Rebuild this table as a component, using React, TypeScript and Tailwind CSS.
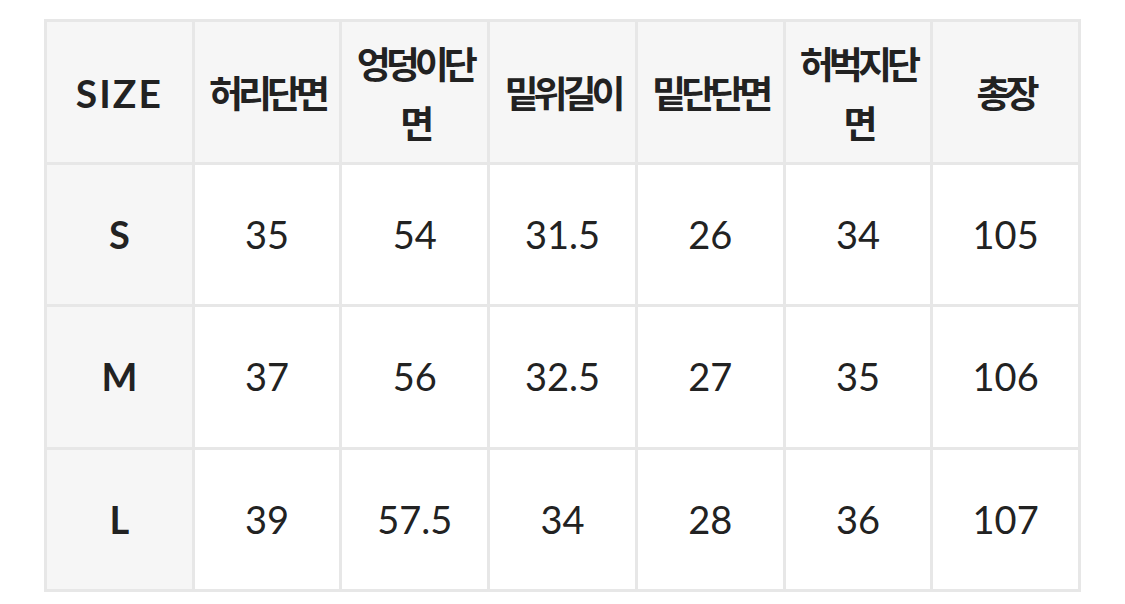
const headers = ["SIZE", "허리단면", "엉덩이단\n면", "밑위길이", "밑단단면", "허벅지단\n면", "총장"];

const rows = [
  ["S", "35", "54", "31.5", "26", "34", "105"],
  ["M", "37", "56", "32.5", "27", "35", "106"],
  ["L", "39", "57.5", "34", "28", "36", "107"],
];

export default function App() {
  return (
    <div className="w-[1125px] h-[604px] bg-white pl-[44px] pt-[19px] font-['Lato','Noto_Sans_CJK_KR',sans-serif] text-[#222]">
      <div className="grid grid-cols-7 grid-rows-4 gap-[3px] p-[3px] w-[1037px] h-[573px] bg-[#e7e7e7]">
        {headers.map((h, i) => (
          <div
            key={h}
            className={`flex items-center justify-center bg-[#f6f6f6] text-center font-bold whitespace-pre-line ${
              i === 0
                ? "text-[39px] tracking-[2px] pt-[2px]"
                : "text-[37px] leading-[59px] tracking-[-5px] pt-[2px] font-['Noto_Sans_CJK_KR',sans-serif]"
            }`}
          >
            {h}
          </div>
        ))}
        {rows.map((r) =>
          r.map((c, j) => (
            <div
              key={r[0] + j}
              className={`flex items-center justify-center text-[38px] ${
                j === 0 ? "bg-[#f6f6f6] font-bold" : "bg-white"
              }`}
            >
              {c}
            </div>
          ))
        )}
      </div>
    </div>
  );
}
